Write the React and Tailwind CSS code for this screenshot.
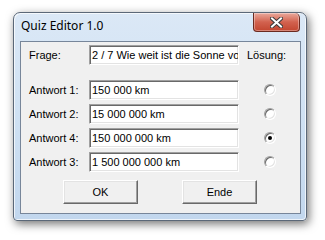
export default function App() {
    const answers = [
        { label: "Antwort 1:", value: "150 000 km", checked: false },
        { label: "Antwort 2:", value: "15 000 000 km", checked: false },
        { label: "Antwort 4:", value: "150 000 000 km", checked: true },
        { label: "Antwort 3:", value: "1 500 000 000 km", checked: false },
    ];

    const field = "h-[20px] w-[150px] overflow-hidden whitespace-nowrap border border-t-[#a0a0a0] border-l-[#a0a0a0] border-b-white border-r-white bg-white pl-[2px] text-[11px] leading-[18px] text-black shadow-[inset_1px_1px_0_#696969,inset_-1px_-1px_0_#e3e3e3]";
    const button = "flex h-[24px] w-[75px] items-center justify-center border border-t-white border-l-white border-b-[#696969] border-r-[#696969] bg-[#f0f0f0] text-[11px] text-black shadow-[inset_-1px_-1px_0_#a0a0a0,inset_1px_1px_0_#e3e3e3]";

    return (
        <div className="h-[240px] w-[325px] bg-white pl-[13px] pt-[12px] font-['Liberation_Sans',Arial,sans-serif]">
            <div className="flex h-[209px] w-[294px] flex-col rounded-t-[7px] rounded-b-[4px] border border-[#5b6878] bg-gradient-to-b from-[#dbe8f6] via-[#cfe1f3] to-[#c2d7ee] shadow-[2px_3px_10px_rgba(0,0,0,0.55),inset_1px_1px_0_rgba(255,255,255,0.7),inset_-1px_-1px_0_rgba(255,255,255,0.7)]">
                {/* title bar */}
                <div className="flex h-[28px] items-start justify-between pl-[7px] pr-[6px]">
                    <span className="mt-[5px] font-['Noto_Sans',sans-serif] text-[12px] leading-[16px] text-black">Quiz Editor 1.0</span>
                    <div className="flex h-[19px] w-[47px] items-center justify-center rounded-b-[4px] rounded-tr-[5px] border border-[#6b2a20] border-t-0 bg-gradient-to-b from-[#e9a99c] via-[#d2624f] to-[#c2452f] shadow-[inset_0_0_0_1px_rgba(255,255,255,0.35)]">
                        <svg width="13" height="11" viewBox="0 0 13 11">
                            <path d="M2 1.5 L11 9.5 M11 1.5 L2 9.5" stroke="#3b3b3b" strokeWidth="4" strokeLinecap="square" />
                            <path d="M2 1.5 L11 9.5 M11 1.5 L2 9.5" stroke="#ffffff" strokeWidth="2" strokeLinecap="square" />
                        </svg>
                    </div>
                </div>

                {/* client area */}
                <div className="flex flex-1 flex-col pb-[6px] pl-[6px] pr-[5px]">
                    <div className="flex flex-1 flex-col border border-[#77869a] bg-[#f0f0f0] pl-[8px] pt-[3px] text-[11px] text-black">
                        <div className="flex h-[20px] items-center">
                            <span className="w-[60px]">Frage:</span>
                            <div className={field}>2 / 7 Wie weit ist die Sonne von der Erde entfernt?</div>
                            <span className="ml-[8px]">Lösung:</span>
                        </div>

                        <div className="mt-[15px] flex flex-col gap-[4px]">
                            {answers.map((a) => (
                                <div key={a.label} className="flex h-[20px] items-center">
                                    <span className="w-[60px]">{a.label}</span>
                                    <div className={field}>{a.value}</div>
                                    <div className="ml-[25px] flex h-[12px] w-[12px] items-center justify-center rounded-full border border-t-[#a0a0a0] border-l-[#a0a0a0] border-b-white border-r-white bg-white shadow-[inset_1px_1px_0_#696969,inset_-1px_-1px_0_#e3e3e3]">
                                        {a.checked && <div className="h-[4px] w-[4px] rounded-full bg-black" />}
                                    </div>
                                </div>
                            ))}
                        </div>

                        <div className="mt-[8px] flex gap-[44px] pl-[34px]">
                            <div className={button}>OK</div>
                            <div className={button}>Ende</div>
                        </div>
                    </div>
                </div>
            </div>
        </div>
    );
}
